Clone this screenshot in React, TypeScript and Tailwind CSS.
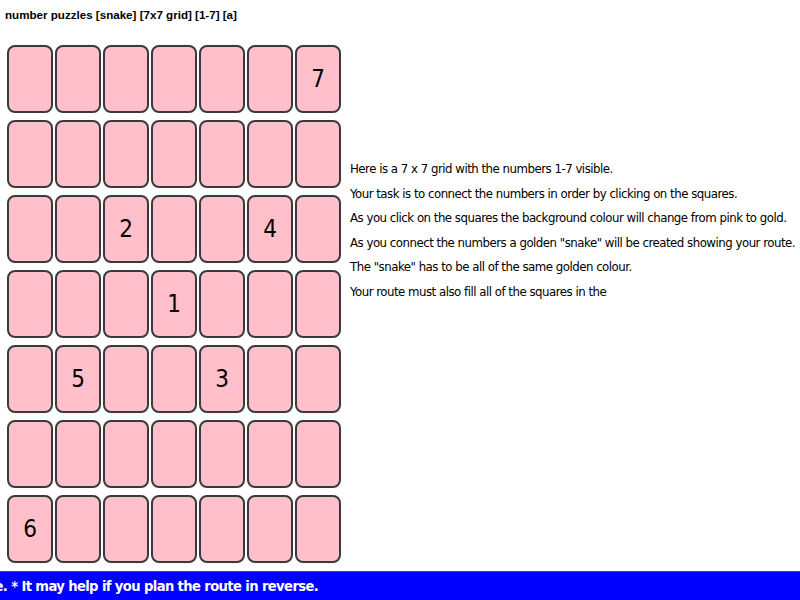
import React from "react"

const comic = "font-['Comic_Sans_MS','DejaVu_Sans_Condensed','DejaVu_Sans',sans-serif]"

// 7x7 board, 0 = empty square
const board: number[][] = [
  [0, 0, 0, 0, 0, 0, 7],
  [0, 0, 0, 0, 0, 0, 0],
  [0, 0, 2, 0, 0, 4, 0],
  [0, 0, 0, 1, 0, 0, 0],
  [0, 5, 0, 0, 3, 0, 0],
  [0, 0, 0, 0, 0, 0, 0],
  [6, 0, 0, 0, 0, 0, 0],
]

const lines = [
  "Here is a 7 x 7 grid with the numbers 1-7 visible.",
  "Your task is to connect the numbers in order by clicking on the squares.",
  "As you click on the squares the background colour will change from pink to gold.",
  "As you connect the numbers a golden \"snake\" will be created showing your route.",
  "The \"snake\" has to be all of the same golden colour.",
  "Your route must also fill all of the squares in the",
]

function Cell({ n }: { n: number }) {
  return (
    <div
      className={`w-[46px] h-[68px] rounded-[8px] border-2 border-[#3a3a3a] bg-[#ffc0cb] flex items-center justify-center text-[24px] text-black ${comic}`}
    >
      {n > 0 ? n : ""}
    </div>
  )
}

export default function App() {
  return (
    <div className="w-[800px] h-[600px] bg-white flex flex-col overflow-hidden">
      <div className="h-[30px] pl-[5px] flex items-center text-[11.6px] font-bold text-black font-['Liberation_Sans',sans-serif]">
        number puzzles [snake] [7x7 grid] [1-7] [a]
      </div>
      <div className="flex-1 flex items-start">
        <div className="shrink-0 pl-[7px] pt-[15px] grid grid-cols-[repeat(7,46px)] gap-x-[2px] gap-y-[7px]">
          {board.flat().map((n, i) => (
            <Cell key={i} n={n} />
          ))}
        </div>
        <div className={`pl-[9px] pt-[127px] text-[13.1px] tracking-[-0.5px] leading-[24.6px] text-black whitespace-nowrap ${comic}`}>
          {lines.map((l, i) => (
            <div key={i}>{l}</div>
          ))}
        </div>
      </div>
      <div className="h-[29px] bg-[#0000ff] border-t border-[#3b3bff] overflow-hidden flex items-center">
        <span className={`-ml-[41px] whitespace-nowrap text-white font-bold text-[14.6px] tracking-[-0.6px] ${comic}`}>
          puzzle. * It may help if you plan the route in reverse.
        </span>
      </div>
    </div>
  )
}
